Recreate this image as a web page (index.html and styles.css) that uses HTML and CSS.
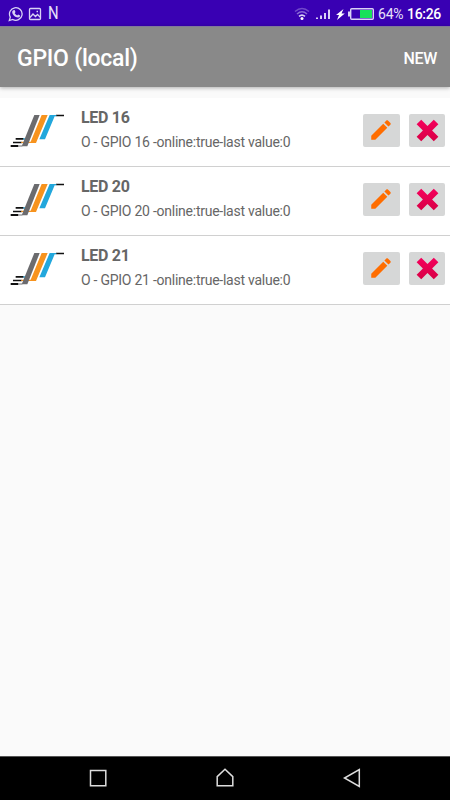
FILE: index.html
```
<!DOCTYPE html>
<html lang="en">
<head>
	<meta charset="utf-8" />
	<title>GPIO (local)</title>
	<link rel="stylesheet" href="styles.css">
</head>
<body>
	<!-- shared icons -->
	<svg class="defs" width="0" height="0">
		<defs>
			<linearGradient id="red" x1="0" y1="0" x2="0" y2="1">
				<stop offset="0" stop-color="#f5005c" />
				<stop offset="1" stop-color="#d80045" />
			</linearGradient>
		</defs>
		<symbol id="logo" viewBox="30 42 165 102">
			<path fill="#111" d="M168 44h24v5h-25zM47 114h24v5H47zM39 125h26v5H39zM32 135h23v6H32z" />
			<path fill="#22a7dc" d="M149 45h21l-2 4h-4l-29 69h-17zM70 115h10v4H70z" />
			<path fill="#f7931e" d="M125 45h18l-35 84H64v-4h28z" />
			<path fill="#6b6b6e" d="M103 45h16L82 139H65z" />
			<path fill="#929294" d="M54 136h13v4H54z" />
		</symbol>
		<symbol id="pencil" viewBox="0 0 24 24">
			<path fill="#ff6d00" d="M3 17.25V21h3.75L17.81 9.94l-3.75-3.75L3 17.25zM20.71 7.04c.39-.39.39-1.02 0-1.41l-2.34-2.34c-.39-.39-1.02-.39-1.41 0l-1.83 1.83 3.75 3.75 1.83-1.83z" />
		</symbol>
		<symbol id="cross" viewBox="0 0 22 22">
			<path fill="url(#red)" d="M5 .8 11 6.6 17 .8 21.4 5.1 15.4 11l6 5.9-4.4 4.3-6-5.8-6 5.8L.6 16.9l6-5.9-6-5.9z" />
		</symbol>
	</svg>

	<div class="status">
		<svg class="notes" width="54" height="16" viewBox="0 0 54 16" fill="none" stroke="#d9d2f5" stroke-width="1.3">
			<path d="M1.3 14.5l1-3.4a6.3 6.3 0 1 1 2.4 2.4z" />
			<path fill="#d9d2f5" stroke="none" d="M5.4 4.3l1.2-.2.9 2-.8 1.1c.6 1.1 1.4 1.8 2.5 2.3l.9-1 2 1c0 1.2-.9 2-2 2-3 0-5.9-3-5.9-5.5 0-.8.5-1.3 1.2-1.7z" />
			<rect x="21.5" y="2.5" width="11" height="11" rx="1" />
			<path d="M22 11.5l3-3.5 2.500 2.500 2-2 3 3M28.5 5.5h1.5" />
		</svg>
		<span class="letter">N</span>
		<svg class="signals" width="80" height="16" viewBox="0 0 80 16">
			<g fill="none" stroke="#d9d2f5" stroke-width="1.5">
				<path opacity=".35" d="M1 5.5q7-6 14 0" />
				<path opacity=".5" d="M3 8q5-4.5 10 0" />
				<path d="M5 10.4q3-2.6 6 0" />
			</g>
			<circle cx="8" cy="12.5" r="1.5" fill="#fff" />
			<path fill="#d9d2f5" d="M22 11.5h2V13h-2zM26 9.5h2V13h-2zM30 7h2v6h-2zM34 3.500h2V13h-2z" />
			<path fill="#fff" d="M49.5 3L42 9h3l-2 5 7.8-6.5H47.5z" />
			<path fill="#d9d2f5" d="M54 5.5h2v5h-2z" />
			<rect x="56.7" y="2.7" width="22.6" height="10.6" rx="1" fill="none" stroke="#d9d2f5" stroke-width="1.4" />
			<path fill="#18e05a" d="M66 4h12v8H66z" />
		</svg>
		<span class="percent">64%</span>
		<span class="clock">16:26</span>
	</div>

	<header class="bar">
		<h1>GPIO (local)</h1>
		<a class="new">NEW</a>
	</header>

	<main class="content">
		<ul class="list">
			<li class="item">
				<svg class="logo"><use href="#logo" /></svg>
				<div class="info">
					<h2>LED 16</h2>
					<p>O - GPIO 16 -online:true-last value:0</p>
				</div>
				<button class="edit" aria-label="Edit"><svg><use href="#pencil" /></svg></button>
				<button class="delete" aria-label="Delete"><svg><use href="#cross" /></svg></button>
			</li>
			<li class="item">
				<svg class="logo"><use href="#logo" /></svg>
				<div class="info">
					<h2>LED 20</h2>
					<p>O - GPIO 20 -online:true-last value:0</p>
				</div>
				<button class="edit" aria-label="Edit"><svg><use href="#pencil" /></svg></button>
				<button class="delete" aria-label="Delete"><svg><use href="#cross" /></svg></button>
			</li>
			<li class="item">
				<svg class="logo"><use href="#logo" /></svg>
				<div class="info">
					<h2>LED 21</h2>
					<p>O - GPIO 21 -online:true-last value:0</p>
				</div>
				<button class="edit" aria-label="Edit"><svg><use href="#pencil" /></svg></button>
				<button class="delete" aria-label="Delete"><svg><use href="#cross" /></svg></button>
			</li>
		</ul>
	</main>

	<nav class="nav">
		<svg width="20" height="20" viewBox="0 0 20 20"><path d="M2.5 2.5h15.3v15.3H2.5z" /></svg>
		<svg width="20" height="20" viewBox="0 0 20 20"><path d="M2.2 17.8V8.6L10 1.3l7.8 7.3v9.2z" /></svg>
		<svg width="20" height="20" viewBox="0 0 20 20"><path d="M17.3 1.5v17L2.5 10z" /></svg>
	</nav>
</body>
</html>
```
FILE: styles.css
```
* { box-sizing: border-box; }
body {
	margin: 0;
	height: 800px;
	display: flex;
	flex-direction: column;
	overflow: hidden;
	background: #fafafa;
	font-family: Roboto, "Liberation Sans", sans-serif;
}
h1, h2, p, ul { margin: 0; padding: 0; }
.defs { display: block; }

/* status bar */
.status {
	height: 26px;
	display: flex;
	align-items: center;
	padding: 1px 9px 0 8px;
	background: #3900b3;
	color: #e6e0fa;
}
.notes { margin-right: -15px; }
.letter { font-size: 17.5px; line-height: 25px; transform: scaleX(0.85); }
.signals { margin-left: auto; }
.percent { margin-left: 4px; font-size: 14px; letter-spacing: -0.2px; width: 29px; }
.clock { font-size: 14px; font-weight: 500; letter-spacing: -0.3px; color: #fff; }

/* title bar */
.bar {
	position: relative;
	height: 61px;
	display: flex;
	align-items: center;
	justify-content: space-between;
	padding: 2px 13px 0 17px;
	background: #898989;
	border-top: 1px solid #81789a;
	box-shadow: 0 1px 4px rgba(0, 0, 0, 0.3);
	color: #fff;
}
.bar h1 { font-size: 23px; font-weight: 500; letter-spacing: -0.25px; }
.new { font-size: 16px; font-weight: 500; letter-spacing: -0.3px; }

/* device list */
.content { flex: 1; padding-top: 11px; }
.list { list-style: none; background: #fff; }
.item {
	height: 69px;
	display: flex;
	align-items: center;
	padding: 0 5px 4px 10px;
	border-bottom: 1px solid #d0d0d0;
}
.logo { width: 55px; height: 34px; margin: 2px 16px 0 0; }
.info { flex: 1; color: #666; white-space: nowrap; }
.info h2 { font-size: 16px; line-height: 24px; font-weight: 700; letter-spacing: -0.3px; }
.info p { font-size: 14px; line-height: 25px; letter-spacing: -0.25px; }
.edit, .delete {
	width: 36px;
	height: 33px;
	display: flex;
	align-items: center;
	justify-content: center;
	padding: 0;
	border: 0;
	border-radius: 2px;
	background: #d6d7d7;
}
.edit { width: 37px; }
.delete { margin-left: 9px; }
.edit svg { width: 26px; height: 26px; margin-right: 1px; }
.delete svg { width: 23px; height: 23px; }

/* system navigation */
.nav {
	height: 44px;
	display: flex;
	align-items: center;
	justify-content: space-between;
	padding: 0 88px;
	background: #000;
	border-top: 1px solid #555;
}
.nav path { fill: none; stroke: #ddd; stroke-width: 1.5; }
.nav svg { margin-top: -1px; }
```
